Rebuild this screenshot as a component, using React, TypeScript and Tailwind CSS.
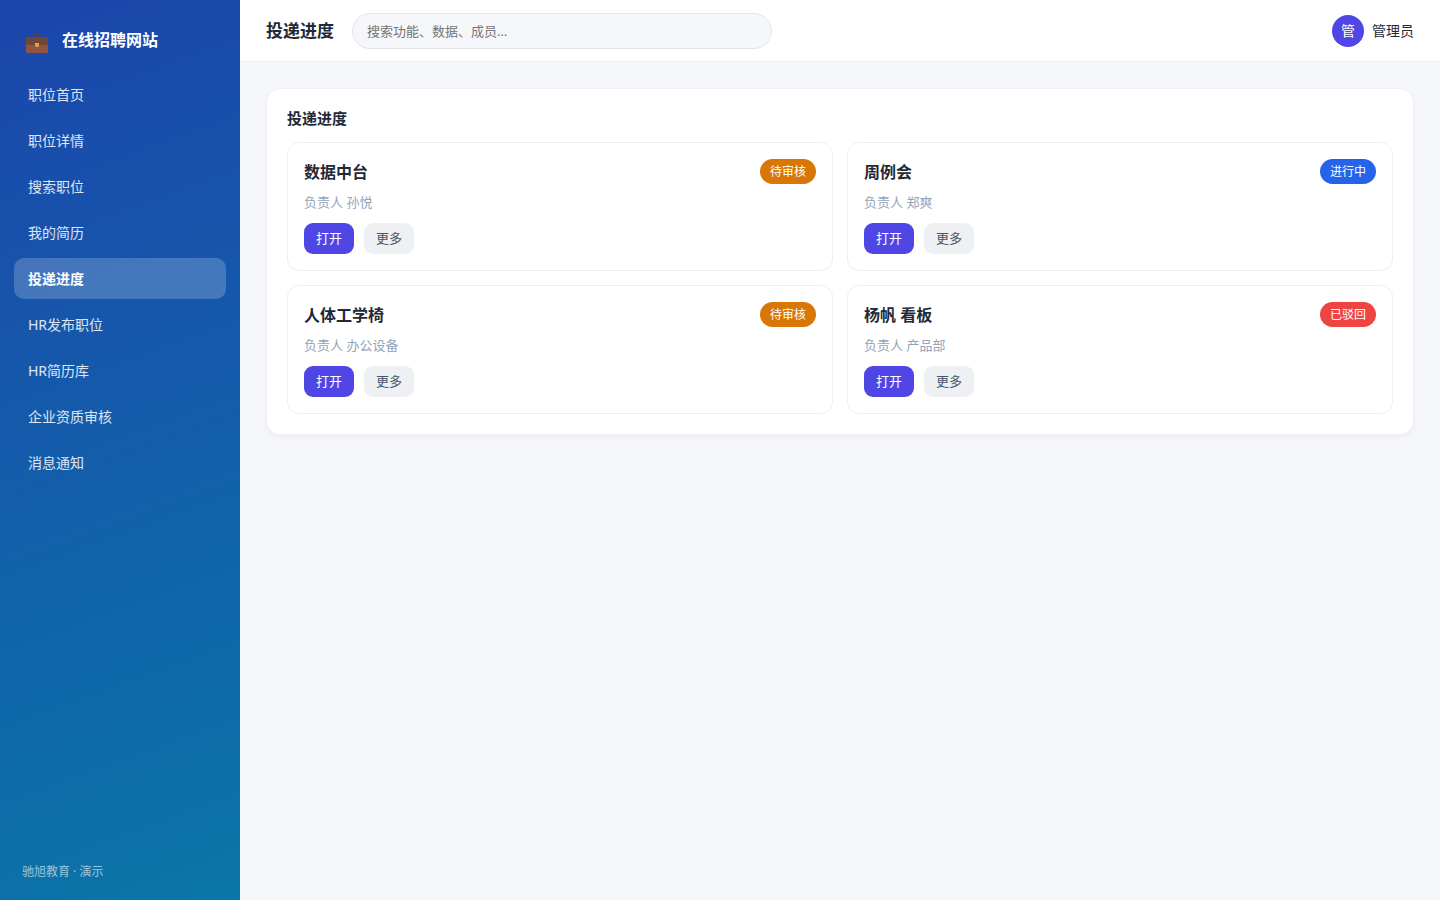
type Status = "pending" | "active" | "rejected";

type Delivery = {
  title: string;
  owner: string;
  status: Status;
};

const navItems = [
  "职位首页",
  "职位详情",
  "搜索职位",
  "我的简历",
  "投递进度",
  "HR发布职位",
  "HR简历库",
  "企业资质审核",
  "消息通知",
];

const deliveries: Delivery[] = [
  { title: "数据中台", owner: "孙悦", status: "pending" },
  { title: "周例会", owner: "郑爽", status: "active" },
  { title: "人体工学椅", owner: "办公设备", status: "pending" },
  { title: "杨帆 看板", owner: "产品部", status: "rejected" },
];

const statusStyles: Record<Status, { label: string; className: string }> = {
  pending: { label: "待审核", className: "bg-[#d97706]" },
  active: { label: "进行中", className: "bg-[#2563eb]" },
  rejected: { label: "已驳回", className: "bg-[#ef4444]" },
};

const BriefcaseIcon = () => (
  <svg
    viewBox="0 0 22 26"
    className="h-[26px] w-[22px] shrink-0"
    aria-hidden="true"
  >
    <path
      d="M7.6 10.6L8.6 8.4Q9.2 7.2 10.4 7.2H11.6Q12.8 7.2 13.4 8.4L14.4 10.6"
      fill="none"
      stroke="#5f4338"
      strokeWidth="1.5"
    />
    <path d="M0 15H22V25Q22 26 21 26H1Q0 26 0 25Z" fill="#8d5542" />
    <path
      d="M1 10H21Q22 10 22 11V15.5Q22 18 19.5 18H2.5Q0 18 0 15.5V11Q0 10 1 10Z"
      fill="#6d4838"
    />
    <rect x="9" y="16" width="4" height="4" rx="0.4" fill="#e2943b" />
    <rect x="9" y="16" width="4" height="1.4" rx="0.4" fill="#f0a84c" />
  </svg>
);

const Sidebar = () => (
  <aside className="flex w-60 shrink-0 flex-col bg-[linear-gradient(160deg,#1c45ac,#0a76a8)] px-3.5 pt-5 pb-[18px] text-white">
    <div className="flex h-10 items-center gap-3.5 px-3">
      <BriefcaseIcon />
      <span className="text-base font-bold">在线招聘网站</span>
    </div>

    <nav className="mt-3.5 flex flex-col gap-[5px]">
      {navItems.map((item) => {
        const current = item === "投递进度";
        return (
          <a
            key={item}
            href="#"
            aria-current={current ? "page" : undefined}
            className={
              current
                ? "flex h-[41px] items-center rounded-[10px] bg-white/20 px-3.5 text-sm font-bold text-white"
                : "flex h-[41px] items-center rounded-[10px] px-3.5 text-sm text-white/85"
            }
          >
            {item}
          </a>
        );
      })}
    </nav>

    <p className="mt-auto px-2 text-xs leading-5 text-white/60">
      驰旭教育 · 演示
    </p>
  </aside>
);

const Header = () => (
  <header className="flex h-[62px] items-center gap-[18px] border-b border-[#eceef3] bg-white px-[26px]">
    <h1 className="shrink-0 text-[17px] font-bold">投递进度</h1>
    <input
      type="search"
      aria-label="搜索"
      placeholder="搜索功能、数据、成员…"
      className="h-9 w-full max-w-[420px] rounded-full border border-[#e2e5ee] bg-[#f5f7fb] px-3.5 text-[13px] outline-none placeholder:text-[#757575]"
    />
    <div className="ml-auto flex shrink-0 items-center gap-2 text-sm">
      <span className="flex size-8 items-center justify-center rounded-full bg-[#4f46e5] text-white">
        管
      </span>
      <span>管理员</span>
    </div>
  </header>
);

const DeliveryCard = ({ title, owner, status }: Delivery) => {
  const { label, className } = statusStyles[status];

  return (
    <article className="rounded-xl border border-[#eeeff3] p-4">
      <div className="flex h-[25px] items-center justify-between">
        <h3 className="text-base font-bold">{title}</h3>
        <span
          className={`flex h-[25px] items-center rounded-full px-2.5 text-xs text-white ${className}`}
        >
          {label}
        </span>
      </div>
      <p className="mt-2 text-[13px] leading-5 text-[#94a3b8]">
        负责人 {owner}
      </p>
      <div className="mt-[11px] flex gap-2.5">
        <button
          type="button"
          className="h-[31px] rounded-[9px] bg-[#4f46e5] px-3 text-[13px] text-white"
        >
          打开
        </button>
        <button
          type="button"
          className="h-[31px] rounded-[9px] bg-[#eef0f4] px-3 text-[13px] text-[#475569]"
        >
          更多
        </button>
      </div>
    </article>
  );
};

export default function App() {
  return (
    <div className="flex min-h-screen bg-[#f5f7fb] font-['Noto_Sans','Noto_Sans_CJK_SC',sans-serif] text-[#1f2937]">
      <Sidebar />
      <div className="flex min-w-0 flex-1 flex-col">
        <Header />
        <main className="p-[26px]">
          <section className="rounded-[14px] border border-[#eff1f5] bg-white p-5 shadow-[0_2px_6px_rgba(15,23,42,0.04)]">
            <h2 className="text-[15px] leading-[18px] font-bold">投递进度</h2>
            <div className="mt-[15px] grid grid-cols-2 gap-3.5">
              {deliveries.map((delivery) => (
                <DeliveryCard key={delivery.title} {...delivery} />
              ))}
            </div>
          </section>
        </main>
      </div>
    </div>
  );
}
